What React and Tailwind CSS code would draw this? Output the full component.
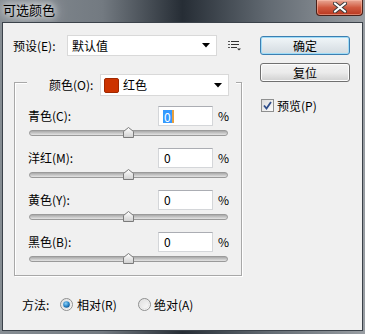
const cjk = "font-['Microsoft_YaHei','Noto_Sans_CJK_SC',sans-serif]";

const Arrow = () => (
  <svg width="8" height="5" viewBox="0 0 8 5" className="shrink-0">
    <path d="M0 0h8L4 4.5z" fill="#000" />
  </svg>
);

const Slider = () => (
  <div className="relative h-[14px] ml-[14px] w-[199px]">
    <div className="absolute left-0 right-0 top-[4px] h-[6px] rounded-full border border-[#9a9a9a] bg-gradient-to-b from-[#a9a9a9] to-[#e4e4e4]" />
    <svg width="11" height="11" viewBox="0 0 11 11" className="absolute left-[94px] top-[1px]">
      <defs>
        <linearGradient id="thumb" x1="0" y1="0" x2="0" y2="1">
          <stop offset="0" stopColor="#ffffff" />
          <stop offset="1" stopColor="#cfcfcf" />
        </linearGradient>
      </defs>
      <path d="M5.5 0.5L10.5 4.5V10.5H0.5V4.5Z" fill="url(#thumb)" stroke="#7b7b7b" />
    </svg>
  </div>
);

const Row = ({ label, selected }) => (
  <div className="flex flex-col">
    <div className="flex items-center h-[20px] pl-[13px]">
      <span className="w-[130px] text-[12px]">{label}</span>
      <div className="w-[55px] h-[20px] bg-white border border-[#d4d6d9] border-t-[#abadb3] flex items-center pl-[4px] text-[12px]">
        {selected ? (
          <span className="bg-[#3399ff] text-white leading-[13px] px-[1px] border-r-2 border-[#e8a040]">0</span>
        ) : (
          <span className="pl-[1px]">0</span>
        )}
      </div>
      <span className="ml-[5px] text-[12px]">%</span>
    </div>
    <Slider />
  </div>
);

const Radio = ({ checked }) => (
  <svg width="13" height="13" viewBox="0 0 13 13" className="shrink-0">
    <defs>
      <linearGradient id="rb" x1="0" y1="0" x2="1" y2="1">
        <stop offset="0" stopColor="#dcdcdc" />
        <stop offset="1" stopColor="#ffffff" />
      </linearGradient>
      <radialGradient id="rd" cx="0.4" cy="0.35" r="0.7">
        <stop offset="0" stopColor="#8fd2f7" />
        <stop offset="0.6" stopColor="#2a86c8" />
        <stop offset="1" stopColor="#0d4f8c" />
      </radialGradient>
    </defs>
    <circle cx="6.5" cy="6.5" r="6" fill="url(#rb)" stroke="#8e8f8f" />
    <circle cx="6.5" cy="6.5" r="4.3" fill="none" stroke="#e6e6e6" />
    {checked && <circle cx="6.5" cy="6.5" r="3.3" fill="url(#rd)" />}
  </svg>
);

export default function App() {
  return (
    <div className={`w-[365px] h-[334px] flex flex-col bg-[linear-gradient(to_right,#868d93_0%,#737a81_28%,#262d35_50%,#636b73_74%,#999ea3_100%)] ${cjk} text-black`}>
      {/* title bar */}
      <div className="h-[22px] flex items-start justify-between shrink-0">
        <span className="ml-[3px] mt-[2px] text-[13px] leading-[16px] text-black [text-shadow:0_0_6px_#ffffff,0_0_12px_#ffffff,0_0_16px_#d8dbde]">可选颜色</span>
        <div className="mr-[2px] w-[47px] h-[16px] rounded-b-[4px] border border-t-0 border-[#4a2018] bg-gradient-to-b from-[#e8a896] via-[#d05a40] to-[#b8361e] flex items-center justify-center shadow-[inset_0_0_0_1px_rgba(255,200,180,0.5)]">
          <svg width="14" height="11" viewBox="0 0 14 11">
            <path d="M2 1.5L12 9.5M12 1.5L2 9.5" stroke="#3a3a3a" strokeWidth="4" strokeLinecap="round" />
            <path d="M2 1.5L12 9.5M12 1.5L2 9.5" stroke="#ffffff" strokeWidth="2.2" strokeLinecap="round" />
          </svg>
        </div>
      </div>

      {/* client area */}
      <div className="flex-1 ml-[2px] mr-[2px] mb-[3px] border border-[#3b424a] bg-[#f0f0f0] flex">
        {/* left column */}
        <div className="w-[240px] pl-[10px] pt-[12px] flex flex-col">
          <div className="flex items-center h-[21px]">
            <span className="w-[54px] text-[12px]">预设(E):</span>
            <div className="w-[150px] h-[21px] bg-white border border-[#d9d9d9] flex items-center justify-between pl-[4px] pr-[6px] text-[12px]">
              <span>默认值</span>
              <Arrow />
            </div>
            <svg width="13" height="11" viewBox="0 0 13 11" className="ml-[11px]">
              <path d="M0 1.5h2M0 4.5h2M0 7.5h2" stroke="#555" strokeWidth="1" />
              <path d="M3 1.5h8M3 4.5h8M3 7.5h6" stroke="#333" strokeWidth="1" />
              <path d="M9 8.5h4L11 10.5z" fill="#333" />
            </svg>
          </div>

          {/* group box */}
          <div className="mt-[26px] ml-[1px] w-[228px] border border-[#a8a8a8] shadow-[1px_1px_0_#ffffff,inset_1px_1px_0_#ffffff] flex flex-col pb-[9px]">
            <div className="-mt-[9px] ml-[12px] w-[209px] h-[22px] bg-[#f0f0f0] flex items-center pl-[22px]">
              <span className="w-[51px] text-[12px]">颜色(O):</span>
              <div className="w-[129px] h-[22px] bg-white border border-[#d9d9d9] flex items-center pl-[3px] pr-[6px] text-[12px]">
                <span className="w-[15px] h-[15px] rounded-[2px] bg-[#cc3300] border border-[#a02800] mr-[4px]" />
                <span className="flex-1">红色</span>
                <Arrow />
              </div>
            </div>
            <div className="mt-[10px] flex flex-col gap-[8px]">
              <Row label="青色(C):" selected />
              <Row label="洋红(M):" />
              <Row label="黄色(Y):" />
              <Row label="黑色(B):" />
            </div>
          </div>

          {/* method */}
          <div className="mt-[20px] ml-[9px] flex items-center h-[17px] text-[12px]">
            <span className="w-[38px]">方法:</span>
            <Radio checked />
            <span className="ml-[4px] w-[61px]">相对(R)</span>
            <Radio />
            <span className="ml-[3px]">绝对(A)</span>
          </div>
        </div>

        {/* right column */}
        <div className="ml-[17px] pt-[13px] w-[90px] flex flex-col text-[12px]">
          <button className="h-[19px] rounded-[3px] border border-[#3c7fb1] bg-gradient-to-b from-[#f1f6f9] to-[#d3dbe0] shadow-[inset_0_0_0_1px_#9fdcf7] flex items-center justify-center leading-none">
            确定
          </button>
          <button className="mt-[8px] h-[19px] rounded-[3px] border border-[#707070] bg-gradient-to-b from-[#f2f2f2] via-[#ebebeb] to-[#d0d0d0] shadow-[inset_0_0_0_1px_#fcfcfc] flex items-center justify-center leading-none">
            复位
          </button>
          <div className="mt-[17px] ml-[1px] flex items-center h-[13px]">
            <div className="w-[13px] h-[13px] border border-[#8e8f8f] bg-gradient-to-br from-[#dcdcdc] to-[#fbfbfb] flex items-center justify-center">
              <svg width="9" height="9" viewBox="0 0 9 9">
                <path d="M1 4.5L3.5 7.5L8 1" fill="none" stroke="#2e4d8a" strokeWidth="1.8" />
              </svg>
            </div>
            <span className="ml-[3px]">预览(P)</span>
          </div>
        </div>
      </div>
    </div>
  );
}
